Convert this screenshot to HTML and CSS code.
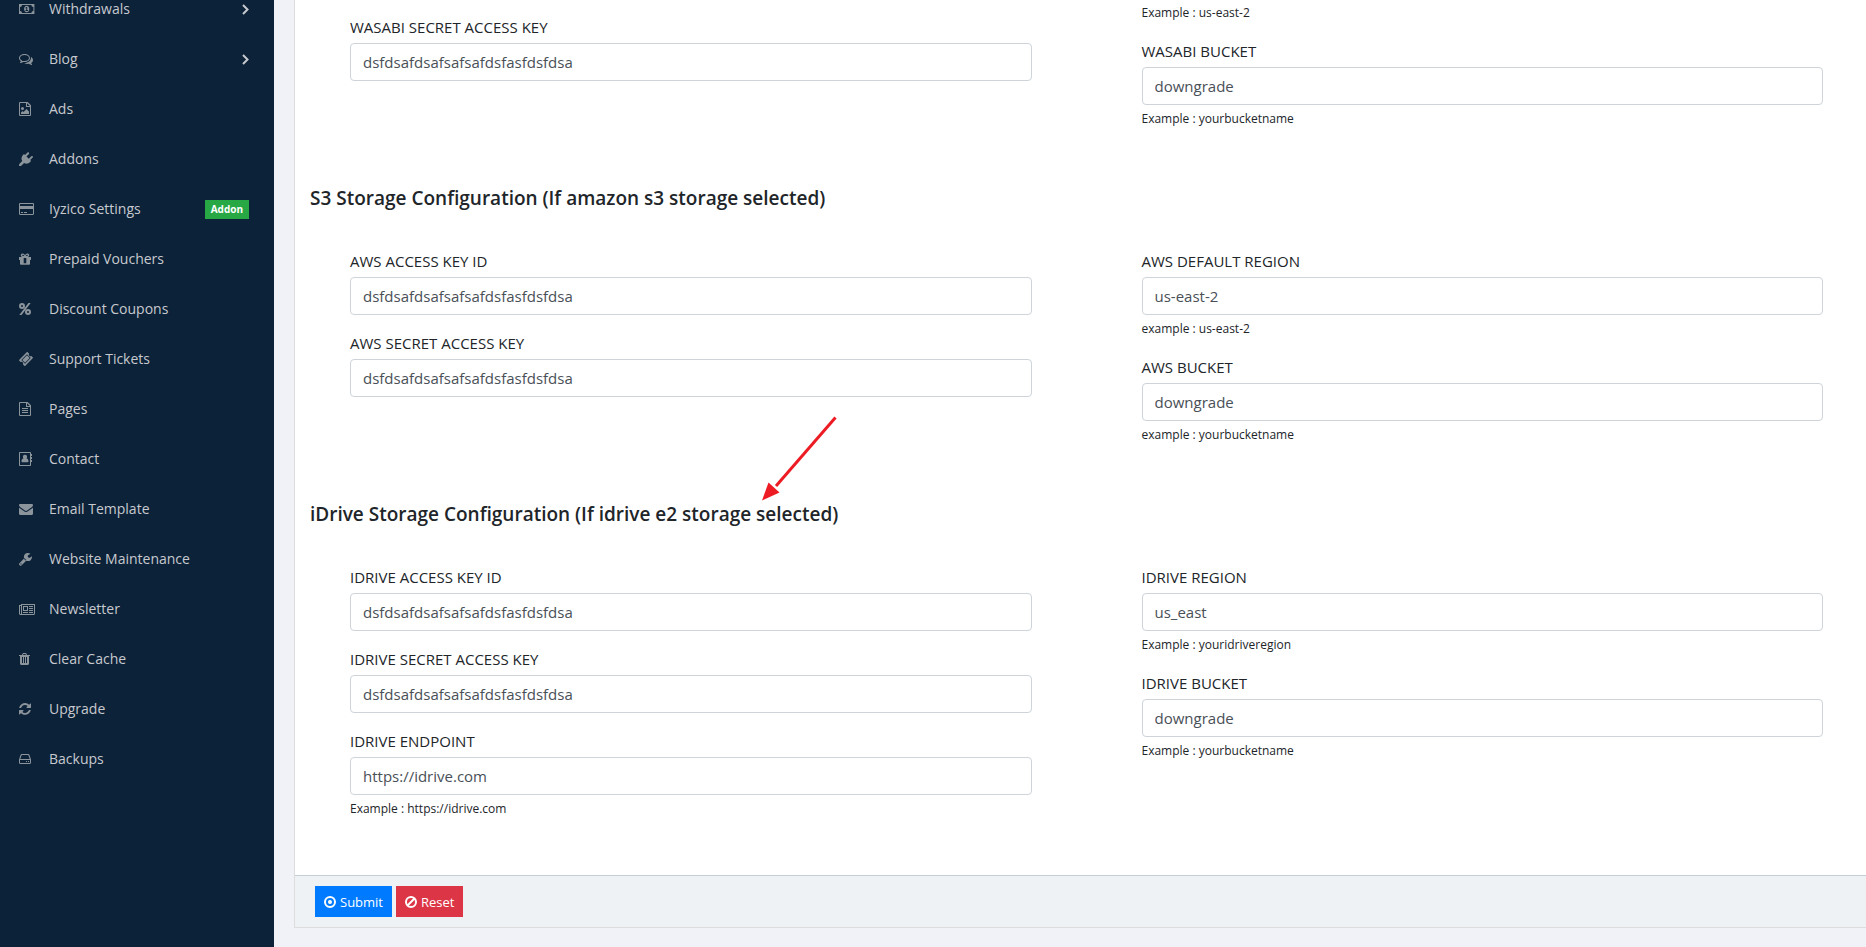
FILE: index.html
```html
<!DOCTYPE html>
<html lang="en">
<head>
  <meta charset="UTF-8">
  <title>Storage Settings</title>
  <link rel="stylesheet" href="styles.css">
</head>
<body>

  <aside class="left-panel">
    <ul class="menu">
      <li><a href="#">
        <svg class="icon" viewBox="0 0 16 16"><path fill-rule="evenodd" d="M0 3h15.400v10H0zM3 4a2 2 0 0 1-2 2v4a2 2 0 0 1 2 2h9.400a2 2 0 0 1 2-2V6a2 2 0 0 1-2-2zM7.700 4.800c1.700 0 2.600 1.400 2.600 3.200s-.9 3.200-2.600 3.200S5.100 9.800 5.100 8s.9-3.200 2.600-3.200zM7.300 6L6.300 6.900l.5.5.5-.4v2h-.8v.9h2.500V9h-.8V6z"/></svg>
        <span>Withdrawals</span>
        <svg class="arrow-right" viewBox="0 0 8 12"><path d="M2 2l4.500 4.500L2 11"/></svg>
      </a></li>
      <li><a href="#">
        <svg class="icon" viewBox="0 0 16 16"><path fill-rule="evenodd" d="M5.500 3C8.600 3 11 4.800 11 7s-2.400 4-5.500 4c-.5 0-1 0-1.400-.1-.7.5-1.800 1-2.900 1.100-.3 0-.4-.4-.2-.6.400-.4.700-.8.900-1.300C.7 9.400 0 8.300 0 7c0-2.200 2.500-4 5.500-4zm0 1C3.100 4 1 5.300 1 7c0 .9.600 1.700 1.600 2.300l.7.4-.3.600.7-.4.400.1c.4.100.9.100 1.400.1C7.900 10.100 10 8.700 10 7S7.900 4 5.500 4zM12 5.900c1.200.7 2 1.800 2 3.100s-.7 2.300-1.900 3c.2.500.5.900.9 1.300.2.200.1.600-.2.600-1.100-.1-2.200-.6-2.900-1.100-1.800.3-3.400-.1-4.600-.9C9 12 12.400 9.800 12 5.900z"/></svg>
        <span>Blog</span>
        <svg class="arrow-right" viewBox="0 0 8 12"><path d="M2 2l4.500 4.500L2 11"/></svg>
      </a></li>
      <li><a href="#">
        <svg class="icon" viewBox="0 0 16 16"><path fill-rule="evenodd" d="M1 1h7.700L12 4.300V14a1 1 0 0 1-1 1H1a1 1 0 0 1-1-1V2a1 1 0 0 1 1-1zm0 1v12h10V6H7V2zm7 .2V5h2.800zM3.500 6a1.500 1.500 0 1 1 0 3 1.500 1.500 0 0 1 0-3zM2 13v-1.500L3.500 10l1 1L7.500 8 10 10.500V13z"/></svg>
        <span>Ads</span>
      </a></li>
      <li><a href="#">
        <svg class="icon" viewBox="0 0 16 16"><path d="M13.700 4.200c.4.400.4 1 0 1.400l-2.500 2.500.9 1-1 1c-1.800 1.700-4.200 2-6 .8L2 14H.1v-1.800L3.200 9C2 7.200 2.300 4.800 4 3l1-1 1 1L8.500.5c.4-.4 1-.4 1.400 0s.4 1 0 1.400L7.500 4.400l2.300 2.300 2.500-2.500c.4-.4 1-.4 1.400 0z" transform="translate(0 1)"/></svg>
        <span>Addons</span>
      </a></li>
      <li><a href="#">
        <svg class="icon" viewBox="0 0 16 16"><path fill-rule="evenodd" d="M1.200 2h12.600c.7 0 1.200.5 1.200 1.200v9.600c0 .7-.5 1.200-1.200 1.200H1.200C.5 14 0 13.500 0 12.800V3.200C0 2.500.5 2 1.200 2zM1 3.200V5h13V3.200L13.800 3H1.200zM1 8v4.800l.2.200h12.600l.2-.2V8zm1 3h2v1H2zm3 0h3v1H5z"/></svg>
        <span>Iyzico Settings</span>
        <span class="badge">Addon</span>
      </a></li>
      <li><a href="#">
        <svg class="icon" viewBox="0 0 16 16"><path fill-rule="evenodd" d="M0 6h4C2.500 6 1.800 5.200 1.800 4.200S2.600 2.500 3.600 2.500c1.200 0 1.800.8 2.400 1.800.6-1 1.200-1.800 2.400-1.800 1 0 1.800.7 1.800 1.700S9.500 6 8 6h4v3h-1v4c0 .5-.4.800-.8.800H1.800c-.4 0-.8-.3-.8-.8V9H0zm3.700-2.300a.7.700 0 0 0 0 1.300h1.500c-.5-.8-.9-1.300-1.500-1.300zm4.600 0c-.6 0-1 .5-1.500 1.300h1.500a.7.700 0 0 0 0-1.300zM4.700 7v5.200h2.600V7z"/></svg>
        <span>Prepaid Vouchers</span>
      </a></li>
      <li><a href="#">
        <svg class="icon" viewBox="0 0 16 16"><path fill-rule="evenodd" d="M3 2a3 3 0 1 1 0 6 3 3 0 0 1 0-6zm0 2a1 1 0 1 0 0 2 1 1 0 0 0 0-2zM9 8a3 3 0 1 1 0 6 3 3 0 0 1 0-6zm0 2a1 1 0 1 0 0 2 1 1 0 0 0 0-2zM9.400 2h2.300L2.600 14H.3z"/></svg>
        <span>Discount Coupons</span>
      </a></li>
      <li><a href="#">
        <svg class="icon" viewBox="0 0 16 16"><path fill-rule="evenodd" d="M8.700 1.300l1.400 1.400a1.600 1.600 0 0 0 2.200 2.200l1.400 1.400c.3.300.3.700 0 1L6.300 14.700c-.3.300-.7.300-1 0l-1.400-1.400a1.600 1.600 0 0 0-2.200-2.200L.3 9.700c-.3-.3-.3-.7 0-1l7.400-7.400c.3-.3.700-.3 1 0zM8 3.300L2.300 9 6 12.700 11.700 7zm0 1L10.700 7 6 11.700 3.300 9z"/></svg>
        <span>Support Tickets</span>
      </a></li>
      <li><a href="#">
        <svg class="icon" viewBox="0 0 16 16"><path fill-rule="evenodd" d="M1 1h7.700L12 4.300V14a1 1 0 0 1-1 1H1a1 1 0 0 1-1-1V2a1 1 0 0 1 1-1zm0 1v12h10V6H7V2zm7 .2V5h2.800zM3 7h6v1H3zm0 2h6v1H3zm0 2h6v1H3z"/></svg>
        <span>Pages</span>
      </a></li>
      <li><a href="#">
        <svg class="icon" viewBox="0 0 16 16"><path fill-rule="evenodd" d="M1 1h10c.6 0 1 .4 1 1v1h1v2h-1v1h1v2h-1v1h1v2h-1v3c0 .6-.4 1-1 1H1c-.6 0-1-.4-1-1V2c0-.6.4-1 1-1zm0 1v12h10V2zm5 1.800a2.100 2.100 0 0 1 1.500 3.600C9 7.500 9.500 8.800 9.500 10.200c0 .6-.4 1-1 1h-5c-.6 0-1-.4-1-1 0-1.400.5-2.700 2-2.800A2.100 2.100 0 0 1 6 3.800z"/></svg>
        <span>Contact</span>
      </a></li>
      <li><a href="#">
        <svg class="icon" viewBox="0 0 16 16"><path d="M1.200 3h11.600c.7 0 1.200.5 1.200 1.100 0 .9-.6 1.600-1.300 2.100L8.500 9.200c-.5.300-1 .7-1.500.7s-1-.4-1.500-.7L1.300 6.200C.8 5.900 0 5 0 4.300 0 3.500.4 3 1.200 3zM0 6.500c.2.300.5.500.8.700l4 2.800c.6.500 1.400 1 2.200 1s1.600-.5 2.200-1l4-2.800c.3-.2.600-.4.800-.7v6.300c0 .7-.5 1.200-1.200 1.200H1.200C.5 14 0 13.500 0 12.800z"/></svg>
        <span>Email Template</span>
      </a></li>
      <li><a href="#">
        <svg class="icon" viewBox="0 0 16 16"><path fill-rule="evenodd" d="M7.700 9.300L2.400 14.600c-.4.400-1 .4-1.400 0l-.8-.8c-.4-.4-.4-1 0-1.400l5.300-5.300a4 4 0 0 0 2.200 2.200zM13 5.900c0 .3-.1.700-.2 1A4 4 0 1 1 9 2c.7 0 1.500.2 2.100.6.200.1.200.3 0 .5L8.800 4.400v1.700l1.500.8 2.300-1.300c.2-.1.400 0 .4.300zM2 12.300a.6.600 0 1 0 0 1.200.6.600 0 0 0 0-1.200z"/></svg>
        <span>Website Maintenance</span>
      </a></li>
      <li><a href="#">
        <svg class="icon" viewBox="0 0 16 16"><path fill-rule="evenodd" d="M2 3h14v9.500c0 .8-.7 1.500-1.500 1.500h-13C.7 14 0 13.300 0 12.500V4h2zM1 5v7.500a.5.500 0 0 0 1 0V5zm2-1v8.500l-.1.500h11.600c.3 0 .5-.2.500-.5V4zm1 1h5v5H4zm1 1v3h3V6zm5-1h4v1h-4zm0 2h4v1h-4zm0 2h4v1h-4zm-6 2h5v1H4zm6 0h4v1h-4z"/></svg>
        <span>Newsletter</span>
      </a></li>
      <li><a href="#">
        <svg class="icon" viewBox="0 0 16 16"><path fill-rule="evenodd" d="M3 4l.6-1.500c.1-.3.500-.5.800-.5h2.200c.3 0 .7.200.8.500L8 4h2.700c.2 0 .3.100.3.300V5h-1v7.600c0 .8-.5 1.400-1.200 1.400H2.200C1.500 14 1 13.400 1 12.600V5H0v-.7c0-.2.100-.3.300-.3zm1.100 0h2.800l-.4-1h-2zM3 6v6h1V6zm2 0v6h1V6zm2 0v6h1V6z"/></svg>
        <span>Clear Cache</span>
      </a></li>
      <li><a href="#">
        <svg class="icon" viewBox="0 0 16 16"><path d="M11.700 9.300A6 6 0 0 1 1.900 12.300l-1 1c-.3.300-.9.100-.9-.4V9.500c0-.3.200-.5.500-.5H4c.5 0 .7.500.4.900l-1.100 1a4 4 0 0 0 6.100-.8l.4-.9.300-.2h1.400c.2 0 .3.200.2.300zM12 3v3.500c0 .3-.2.500-.5.500H8c-.5 0-.7-.5-.4-.9l1.100-1a4 4 0 0 0-6.100.8l-.4.900-.3.200H.4c-.2 0-.3-.2-.2-.3A6 6 0 0 1 10.100 3.700l1-1c.3-.3.9-.1.900.3z"/></svg>
        <span>Upgrade</span>
      </a></li>
      <li><a href="#">
        <svg class="icon" viewBox="0 0 16 16"><path fill-rule="evenodd" d="M3 3h6c.7 0 1.300.5 1.500 1.100L12 8.500v3.300c0 .7-.5 1.200-1.200 1.200H1.200C.5 13 0 12.500 0 11.800V8.500l1.500-4.400C1.700 3.500 2.300 3 3 3zm0 1l-.5.400L1.300 8h9.400L9.500 4.400 9 4zM1 9v3h10V9zm6 1h1v1H7zm2 0h1v1H9z"/></svg>
        <span>Backups</span>
      </a></li>
    </ul>
  </aside>

  <main class="right-panel">
    <form class="card">
      <div class="card-body">

        <div class="row first">
          <div class="col">
            <div class="form-group">
              <label for="wasabi-secret">WASABI SECRET ACCESS KEY</label>
              <input type="text" id="wasabi-secret" value="dsfdsafdsafsafsafdsfasfdsfdsa">
            </div>
          </div>
          <div class="col">
            <small>Example : us-east-2</small>
            <div class="form-group">
              <label for="wasabi-bucket">WASABI BUCKET</label>
              <input type="text" id="wasabi-bucket" value="downgrade">
              <small>Example : yourbucketname</small>
            </div>
          </div>
        </div>

        <h5>S3 Storage Configuration (If amazon s3 storage selected)</h5>
        <div class="row">
          <div class="col">
            <div class="form-group">
              <label for="aws-key">AWS ACCESS KEY ID</label>
              <input type="text" id="aws-key" value="dsfdsafdsafsafsafdsfasfdsfdsa">
            </div>
            <div class="form-group">
              <label for="aws-secret">AWS SECRET ACCESS KEY</label>
              <input type="text" id="aws-secret" value="dsfdsafdsafsafsafdsfasfdsfdsa">
            </div>
          </div>
          <div class="col">
            <div class="form-group">
              <label for="aws-region">AWS DEFAULT REGION</label>
              <input type="text" id="aws-region" value="us-east-2">
              <small>example : us-east-2</small>
            </div>
            <div class="form-group">
              <label for="aws-bucket">AWS BUCKET</label>
              <input type="text" id="aws-bucket" value="downgrade">
              <small>example : yourbucketname</small>
            </div>
          </div>
        </div>

        <h5>
          iDrive Storage Configuration (If idrive e2 storage selected)
          <svg class="pointer" viewBox="0 0 76 86"><path d="M73.500 1.500L14 70" fill="none" stroke="#ed1c24" stroke-width="3"/><path d="M0 84.500L6.500 66.500 17.500 76.500z" fill="#ed1c24"/></svg>
        </h5>
        <div class="row">
          <div class="col">
            <div class="form-group">
              <label for="idrive-key">IDRIVE ACCESS KEY ID</label>
              <input type="text" id="idrive-key" value="dsfdsafdsafsafsafdsfasfdsfdsa">
            </div>
            <div class="form-group">
              <label for="idrive-secret">IDRIVE SECRET ACCESS KEY</label>
              <input type="text" id="idrive-secret" value="dsfdsafdsafsafsafdsfasfdsfdsa">
            </div>
            <div class="form-group">
              <label for="idrive-endpoint">IDRIVE ENDPOINT</label>
              <input type="text" id="idrive-endpoint" value="https://idrive.com">
              <small>Example : https://idrive.com</small>
            </div>
          </div>
          <div class="col">
            <div class="form-group">
              <label for="idrive-region">IDRIVE REGION</label>
              <input type="text" id="idrive-region" value="us_east">
              <small>Example : youridriveregion</small>
            </div>
            <div class="form-group">
              <label for="idrive-bucket">IDRIVE BUCKET</label>
              <input type="text" id="idrive-bucket" value="downgrade">
              <small>Example : yourbucketname</small>
            </div>
          </div>
        </div>

      </div>

      <div class="card-footer">
        <button type="submit" class="btn btn-primary">
          <svg viewBox="0 0 12 12"><circle cx="6" cy="6" r="5" fill="none" stroke="#fff" stroke-width="2"/><circle cx="6" cy="6" r="2" fill="#fff"/></svg>
          Submit
        </button>
        <button type="reset" class="btn btn-danger">
          <svg viewBox="0 0 12 12"><path d="M2.500 9.500l7-7M6 1a5 5 0 1 0 0 10A5 5 0 0 0 6 1z" fill="none" stroke="#fff" stroke-width="2"/></svg>
          Reset
        </button>
      </div>
    </form>
  </main>

</body>
</html>
```

FILE: styles.css
```css
* {
  box-sizing: border-box;
}

body {
  margin: 0;
  display: flex;
  min-height: 100vh;
  overflow: hidden;
  background: #f1f2f7;
  color: #212529;
  font-family: "Open Sans", sans-serif;
  font-size: 15px;
  line-height: 24px;
}

/* sidebar */
.left-panel {
  flex: 0 0 274px;
  background: #0b2239;
}

.menu {
  list-style: none;
  margin: -16px 0 0;
  padding: 0;
}

.menu a {
  display: flex;
  align-items: center;
  height: 50px;
  padding: 0 25px 0 19px;
  color: #c8c9ce;
  font-size: 14px;
  text-decoration: none;
}

.icon {
  width: 16px;
  height: 16px;
  margin-right: 14px;
  fill: #8b939b;
}

.arrow-right {
  width: 8px;
  height: 12px;
  margin-left: auto;
  fill: none;
  stroke: #c8c9ce;
  stroke-width: 2;
}

.badge {
  margin-left: auto;
  padding: 0 6px;
  background: #28a745;
  color: #fff;
  font-size: 10px;
  font-weight: 700;
  line-height: 19px;
}

/* content */
.right-panel {
  flex: 1;
  padding-left: 20px;
}

.card {
  background: #fff;
  border: 1px solid #ddd;
  border-width: 0 0 1px 1px;
}

.card-body {
  padding-bottom: 40px;
}

.row {
  display: grid;
  grid-template-columns: 1fr 1fr;
  gap: 110px;
  padding: 0 43px 0 55px;
}

.row.first {
  margin-top: -1px;
}

.row.first .col:first-child {
  padding-top: 16px;
}

.form-group {
  margin-bottom: 16px;
}

.row.first small + .form-group {
  margin-top: 16px;
}

label {
  display: block;
  margin-bottom: 4px;
}

input {
  display: block;
  width: 100%;
  height: 38px;
  padding: 6px 12px;
  border: 1px solid #ced4da;
  border-radius: 4px;
  background: #fff;
  color: #495057;
  font: inherit;
}

small {
  display: block;
  padding-top: 4px;
  font-size: 12px;
  line-height: 20px;
}

h5 {
  position: relative;
  margin: 41px 0 39px 15px;
  font-size: 19px;
  font-weight: 600;
  line-height: 24px;
}

/* red arrow over the idrive title */
.pointer {
  position: absolute;
  left: 452px;
  top: -86px;
  width: 76px;
  height: 86px;
}

.card-footer {
  display: flex;
  gap: 4px;
  padding: 10px 20px;
  background: #eef2f5;
  border-top: 1px solid #c2cfd6;
}

.btn {
  display: flex;
  align-items: center;
  gap: 4px;
  height: 31px;
  padding: 0 9px;
  border: none;
  color: #fff;
  font: inherit;
  font-size: 13px;
  cursor: pointer;
}

.btn svg {
  width: 12px;
  height: 12px;
}

.btn-primary {
  background: #007bff;
}

.btn-danger {
  background: #dc3545;
}
```
